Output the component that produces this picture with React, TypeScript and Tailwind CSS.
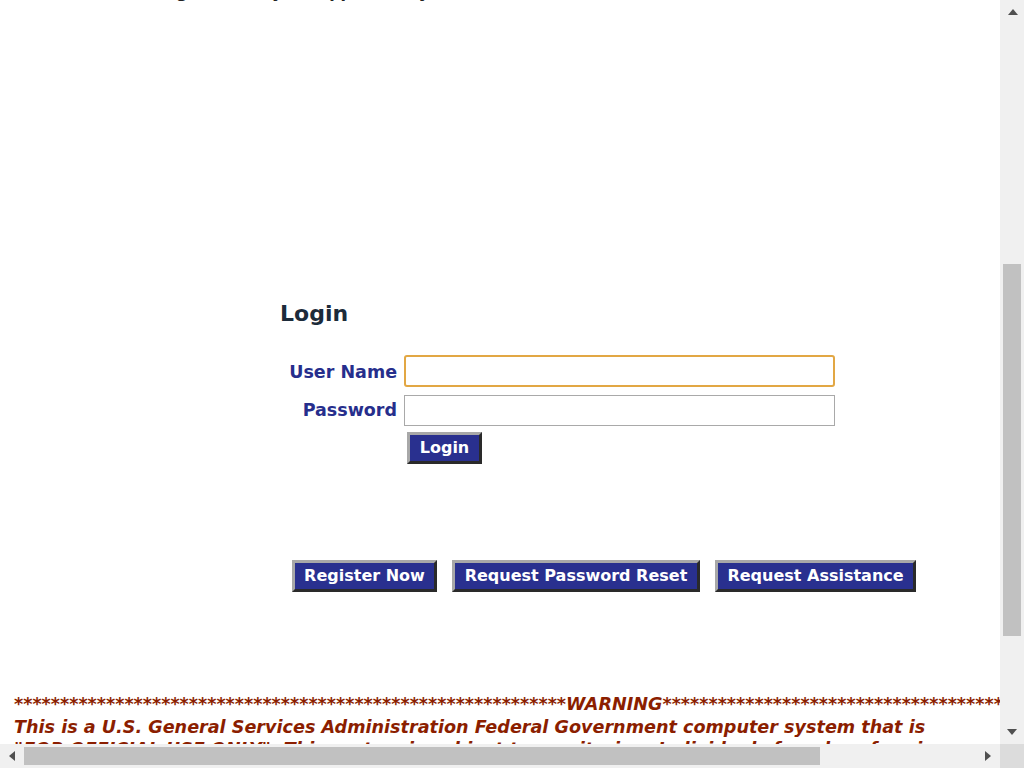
import React from "react";

const stars = (n: number) => "*".repeat(n);

const NavyButton: React.FC<{ label: string; className?: string }> = ({ label, className }) => (
  <button
    type="button"
    className={`h-[32px] bg-[#29308f] text-white font-bold text-[16px] leading-none whitespace-nowrap border-[3px] border-t-[#a8a8a8] border-l-[#a8a8a8] border-b-[#2a2a2a] border-r-[#2a2a2a] ${className ?? ""}`}
  >
    {label}
  </button>
);

const Arrow: React.FC<{ dir: "up" | "down" | "left" | "right" }> = ({ dir }) => {
  const pts = {
    up: "0,7 5,1 10,7",
    down: "0,1 5,7 10,1",
    left: "7,0 1,5 7,10",
    right: "1,0 7,5 1,10",
  }[dir];
  const w = dir === "up" || dir === "down" ? 10 : 8;
  const h = dir === "up" || dir === "down" ? 8 : 10;
  return (
    <svg width={w} height={h} viewBox={`0 0 ${w} ${h}`}>
      <polygon points={pts} fill="#505050" />
    </svg>
  );
};

export default function App() {
  return (
    <div
      className="w-[1024px] h-[768px] flex flex-col overflow-hidden bg-white"
      style={{ fontFamily: '"DejaVu Sans", Verdana, sans-serif' }}
    >
      <div className="flex flex-1 min-h-0">
        {/* page content, scrolled */}
        <div className="w-[1000px] overflow-hidden">
          <div className="h-[2px] overflow-hidden">
            <p className="-mt-[17px] ml-[152px] text-[16px] font-bold leading-[19px] text-[#222] whitespace-nowrap">
              [Sign in with your approved system user account]
            </p>
          </div>

          <div className="ml-[280px] mt-[299px]">
            <h1 className="text-[22px] font-bold leading-[26px] text-[#1c2b3a]">Login</h1>

            <div className="mt-[28px] grid grid-cols-[117px_431px] gap-x-[7px] gap-y-[8px] items-center">
              <label className="text-right text-[17.5px] font-bold text-[#262e8c] pt-[2px]">User Name</label>
              <input
                type="text"
                className="h-[32px] border-2 border-[#e2a744] rounded-[3px] outline-none px-1"
              />
              <label className="text-right text-[17.5px] font-bold text-[#262e8c]">Password</label>
              <input
                type="password"
                className="h-[31px] border border-[#a9a9a9] outline-none px-1"
              />
            </div>

            <div className="mt-[6px] ml-[127px]">
              <NavyButton label="Login" className="w-[75px]" />
            </div>

            <div className="mt-[96px] ml-[12px] flex gap-[15px]">
              <NavyButton label="Register Now" className="w-[145px]" />
              <NavyButton label="Request Password Reset" className="w-[248px]" />
              <NavyButton label="Request Assistance" className="w-[201px]" />
            </div>
          </div>

          <div className="mt-[101px] px-[14px] text-[#8b1e00] font-bold italic text-[17.6px] leading-[22.5px]">
            <p className="whitespace-nowrap">
              {stars(60)}WARNING{stars(60)}
            </p>
            <p className="w-[940px]">
              This is a U.S. General Services Administration Federal Government computer system that is
              "FOR OFFICIAL USE ONLY". This system is subject to monitoring. Individuals found performing
              unauthorized activities are subject to disciplinary action including criminal prosecution.
            </p>
          </div>
        </div>

        {/* vertical scrollbar */}
        <div className="w-[24px] bg-[#f0f0f0] flex flex-col items-center">
          <div className="h-[24px] flex items-center justify-center pl-[1px]">
            <Arrow dir="up" />
          </div>
          <div className="flex-1 w-full flex flex-col px-[3px]">
            <div className="h-[240px]" />
            <div className="h-[372px] bg-[#c1c1c1]" />
          </div>
          <div className="h-[24px] flex items-center justify-center">
            <Arrow dir="down" />
          </div>
        </div>
      </div>

      {/* horizontal scrollbar */}
      <div className="h-[24px] flex bg-[#f0f0f0]">
        <div className="w-[1000px] flex items-center">
          <div className="w-[24px] flex items-center justify-center">
            <Arrow dir="left" />
          </div>
          <div className="flex-1 h-full flex items-center">
            <div className="w-[796px] h-[18px] bg-[#c1c1c1]" />
          </div>
          <div className="w-[24px] flex items-center justify-center">
            <Arrow dir="right" />
          </div>
        </div>
        <div className="w-[24px] bg-[#dcdcdc]" />
      </div>
    </div>
  );
}
